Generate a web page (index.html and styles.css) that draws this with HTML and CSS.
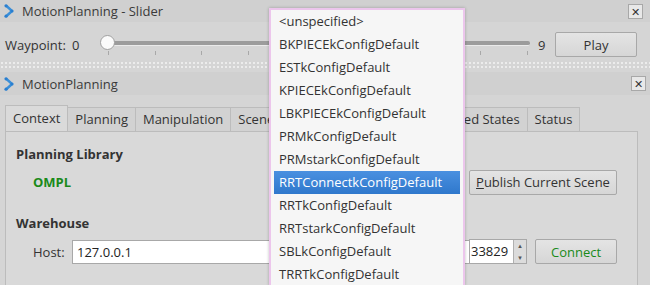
FILE: index.html
```html
<!DOCTYPE html>
<html lang="en">
<head>
    <meta charset="UTF-8">
    <title>MotionPlanning</title>
    <link rel="stylesheet" href="styles.css">
</head>
<body>
    <div class="dock">
        <div class="titlebar">
            <svg class="rviz-icon" width="12" height="14" viewBox="0 0 12 14">
                <path d="M3 1.5 L9 7 L3 12.5" fill="none" stroke="#3a8fd8" stroke-width="2.4" stroke-linejoin="round"/>
                <circle cx="3" cy="1.8" r="1.6" fill="#2a7fd0"/>
                <circle cx="9" cy="7" r="1.6" fill="#2a7fd0"/>
                <circle cx="3" cy="12.2" r="1.6" fill="#2a7fd0"/>
            </svg>
            <span class="title">MotionPlanning - Slider</span>
            <span class="close">&#x2715;</span>
        </div>
        <div class="slider-row">
            <span class="label">Waypoint:</span>
            <span class="value">0</span>
            <div class="slider">
                <div class="groove"></div>
                <div class="handle"></div>
                <div class="ticks">
                    <i></i><i></i><i></i><i></i><i></i><i></i><i></i><i></i><i></i><i></i>
                </div>
            </div>
            <span class="value max">9</span>
            <button class="btn play">Play</button>
        </div>
    </div>

    <div class="splitter"></div>

    <div class="dock">
        <div class="titlebar second">
            <svg class="rviz-icon" width="12" height="14" viewBox="0 0 12 14">
                <path d="M3 1.5 L9 7 L3 12.5" fill="none" stroke="#3a8fd8" stroke-width="2.4" stroke-linejoin="round"/>
                <circle cx="3" cy="1.8" r="1.6" fill="#2a7fd0"/>
                <circle cx="9" cy="7" r="1.6" fill="#2a7fd0"/>
                <circle cx="3" cy="12.2" r="1.6" fill="#2a7fd0"/>
            </svg>
            <span class="title">MotionPlanning</span>
            <span class="close">&#x2715;</span>
        </div>
        <div class="tabs">
            <div class="tab active">Context</div>
            <div class="tab">Planning</div>
            <div class="tab">Manipulation</div>
            <div class="tab">Scene Objects</div>
            <div class="tab">Stored Scenes</div>
            <div class="tab">Stored States</div>
            <div class="tab">Status</div>
        </div>
        <div class="panel">
            <h4>Planning Library</h4>
            <div class="lib-row">
                <span class="ompl">OMPL</span>
                <button class="btn publish"><u>P</u>ublish Current Scene</button>
            </div>
            <h4 class="warehouse">Warehouse</h4>
            <div class="host-row">
                <span class="label">Host:</span>
                <input class="field host" value="127.0.0.1">
                <div class="spin">
                    <span class="spin-value">33829</span>
                    <span class="arrows"><b>&#x25B4;</b><b>&#x25BE;</b></span>
                </div>
                <button class="btn connect">Connect</button>
            </div>
        </div>
    </div>

    <ul class="popup">
        <li>&lt;unspecified&gt;</li>
        <li>BKPIECEkConfigDefault</li>
        <li>ESTkConfigDefault</li>
        <li>KPIECEkConfigDefault</li>
        <li>LBKPIECEkConfigDefault</li>
        <li>PRMkConfigDefault</li>
        <li>PRMstarkConfigDefault</li>
        <li class="selected">RRTConnectkConfigDefault</li>
        <li>RRTkConfigDefault</li>
        <li>RRTstarkConfigDefault</li>
        <li>SBLkConfigDefault</li>
        <li>TRRTkConfigDefault</li>
    </ul>
</body>
</html>
```

FILE: styles.css
```css
html {
    overflow: hidden;
}
body {
    margin: 0;
    width: 650px;
    height: 285px;
    overflow: hidden;
    background-color: #d5d5d5;
    font-family: "Open Sans", "DejaVu Sans", sans-serif;
    font-size: 13px;
    color: #333;
    position: relative;
}
.titlebar {
    height: 22px;
    display: flex;
    align-items: center;
    padding: 0 7px 0 3px;
    background-color: #d0d0d0;
}
.titlebar.second {
    height: 23px;
    padding-right: 4px;
}
.rviz-icon {
    margin-right: 7px;
}
.title {
    flex: 1;
    color: #3a3a3a;
}
.close {
    width: 13px;
    height: 13px;
    border: 1px solid #a8a8a8;
    background-color: #e8e8e8;
    font-size: 11px;
    line-height: 13px;
    text-align: center;
    color: #333;
}
.slider-row {
    height: 27px;
    margin-top: 9px;
    display: flex;
    align-items: center;
    padding: 0 13px 0 5px;
}
.slider-row .label {
    width: 67px;
}
.slider-row .value {
    width: 14px;
}
.slider-row .value.max {
    width: 17px;
}
.slider {
    position: relative;
    flex: 1;
    height: 27px;
    margin: 0 8px 0 20px;
}
.groove {
    position: absolute;
    left: 2px;
    right: 0;
    top: 10px;
    height: 4px;
    border-radius: 2px;
    background-color: #9c9c9c;
    border-bottom: 1px solid #eaeaea;
}
.handle {
    position: absolute;
    left: -6px;
    top: 4px;
    width: 13px;
    height: 13px;
    border-radius: 50%;
    background-color: #fbfbfb;
    border: 1px solid #a0a0a0;
}
.ticks {
    position: absolute;
    left: 2px;
    right: 2px;
    top: 20px;
    display: flex;
    justify-content: space-between;
}
.ticks i {
    width: 1px;
    height: 4px;
    background-color: #a8a8a8;
}
.btn {
    font-family: inherit;
    font-size: 13px;
    color: #333;
    background: linear-gradient(#e4e4e4, #d6d6d6);
    border: 1px solid #a8a8a8;
    border-radius: 2px;
    padding: 0;
    height: 25px;
}
.play {
    width: 82px;
}
.splitter {
    height: 8px;
    margin: 3px 0 3px;
    background-image: radial-gradient(circle, #ececec 1px, transparent 1.4px);
    background-size: 4px 4px;
}
.tabs {
    display: flex;
    align-items: flex-end;
    padding: 11px 0 0 5px;
    height: 25px;
}
.tab {
    height: 23px;
    line-height: 23px;
    padding: 0 7px;
    border: 1px solid #bcbcbc;
    border-bottom: none;
    background-color: #d2d2d2;
    margin-left: -1px;
}
.tab.active {
    height: 25px;
    line-height: 25px;
    background-color: #dadada;
    margin-left: 0;
}
.panel {
    margin: 0 12px 0 5px;
    height: 160px;
    border: 1px solid #bcbcbc;
    background-color: #d9d9d9;
    padding: 0 0 0 10px;
}
.panel h4 {
    margin: 13px 0 0;
    font-size: 13px;
    font-weight: bold;
    height: 18px;
}
.lib-row {
    display: flex;
    align-items: center;
    height: 26px;
    margin-top: 6px;
    padding-right: 20px;
}
.ompl {
    color: #1a8a1a;
    font-weight: bold;
    padding-left: 17px;
    flex: 1;
}
.publish {
    width: 148px;
}
.panel h4.warehouse {
    margin-top: 19px;
}
.host-row {
    display: flex;
    align-items: center;
    height: 25px;
    margin-top: 7px;
    padding-left: 17px;
}
.host-row .label {
    width: 39px;
}
.field {
    font-family: inherit;
    font-size: 13px;
    color: #222;
    height: 24px;
    box-sizing: border-box;
    border: 1px solid #a8a8a8;
    background-color: #fff;
    padding: 0 4px;
}
.host {
    width: 400px;
}
.spin {
    display: flex;
    height: 25px;
    margin-left: -3px;
    box-sizing: border-box;
    border: 1px solid #a8a8a8;
    background-color: #fff;
}
.spin-value {
    width: 42px;
    line-height: 23px;
    padding-left: 1px;
    color: #222;
}
.arrows {
    width: 12px;
    display: flex;
    flex-direction: column;
    background-color: #dcdcdc;
    border-left: 1px solid #b0b0b0;
}
.arrows b {
    flex: 1;
    font-size: 7px;
    line-height: 11px;
    text-align: center;
    color: #555;
    font-weight: normal;
}
.connect {
    width: 82px;
    margin-left: 8px;
    color: #1a8a1a;
}
.popup {
    position: absolute;
    left: 269px;
    top: 8px;
    width: 186px;
    height: 276px;
    margin: 0;
    padding: 0 3px;
    list-style: none;
    background-color: #f6f6f6;
    border: 2px solid #ecc6ec;
    border-bottom: none;
    box-shadow: 0 0 3px rgba(0, 0, 0, 0.25);
    overflow: hidden;
}
.popup li {
    height: 23px;
    line-height: 23px;
    padding-left: 5px;
    color: #333;
}
.popup li.selected {
    background: linear-gradient(#4a90e0, #2f78cc);
    color: #fff;
}
```
